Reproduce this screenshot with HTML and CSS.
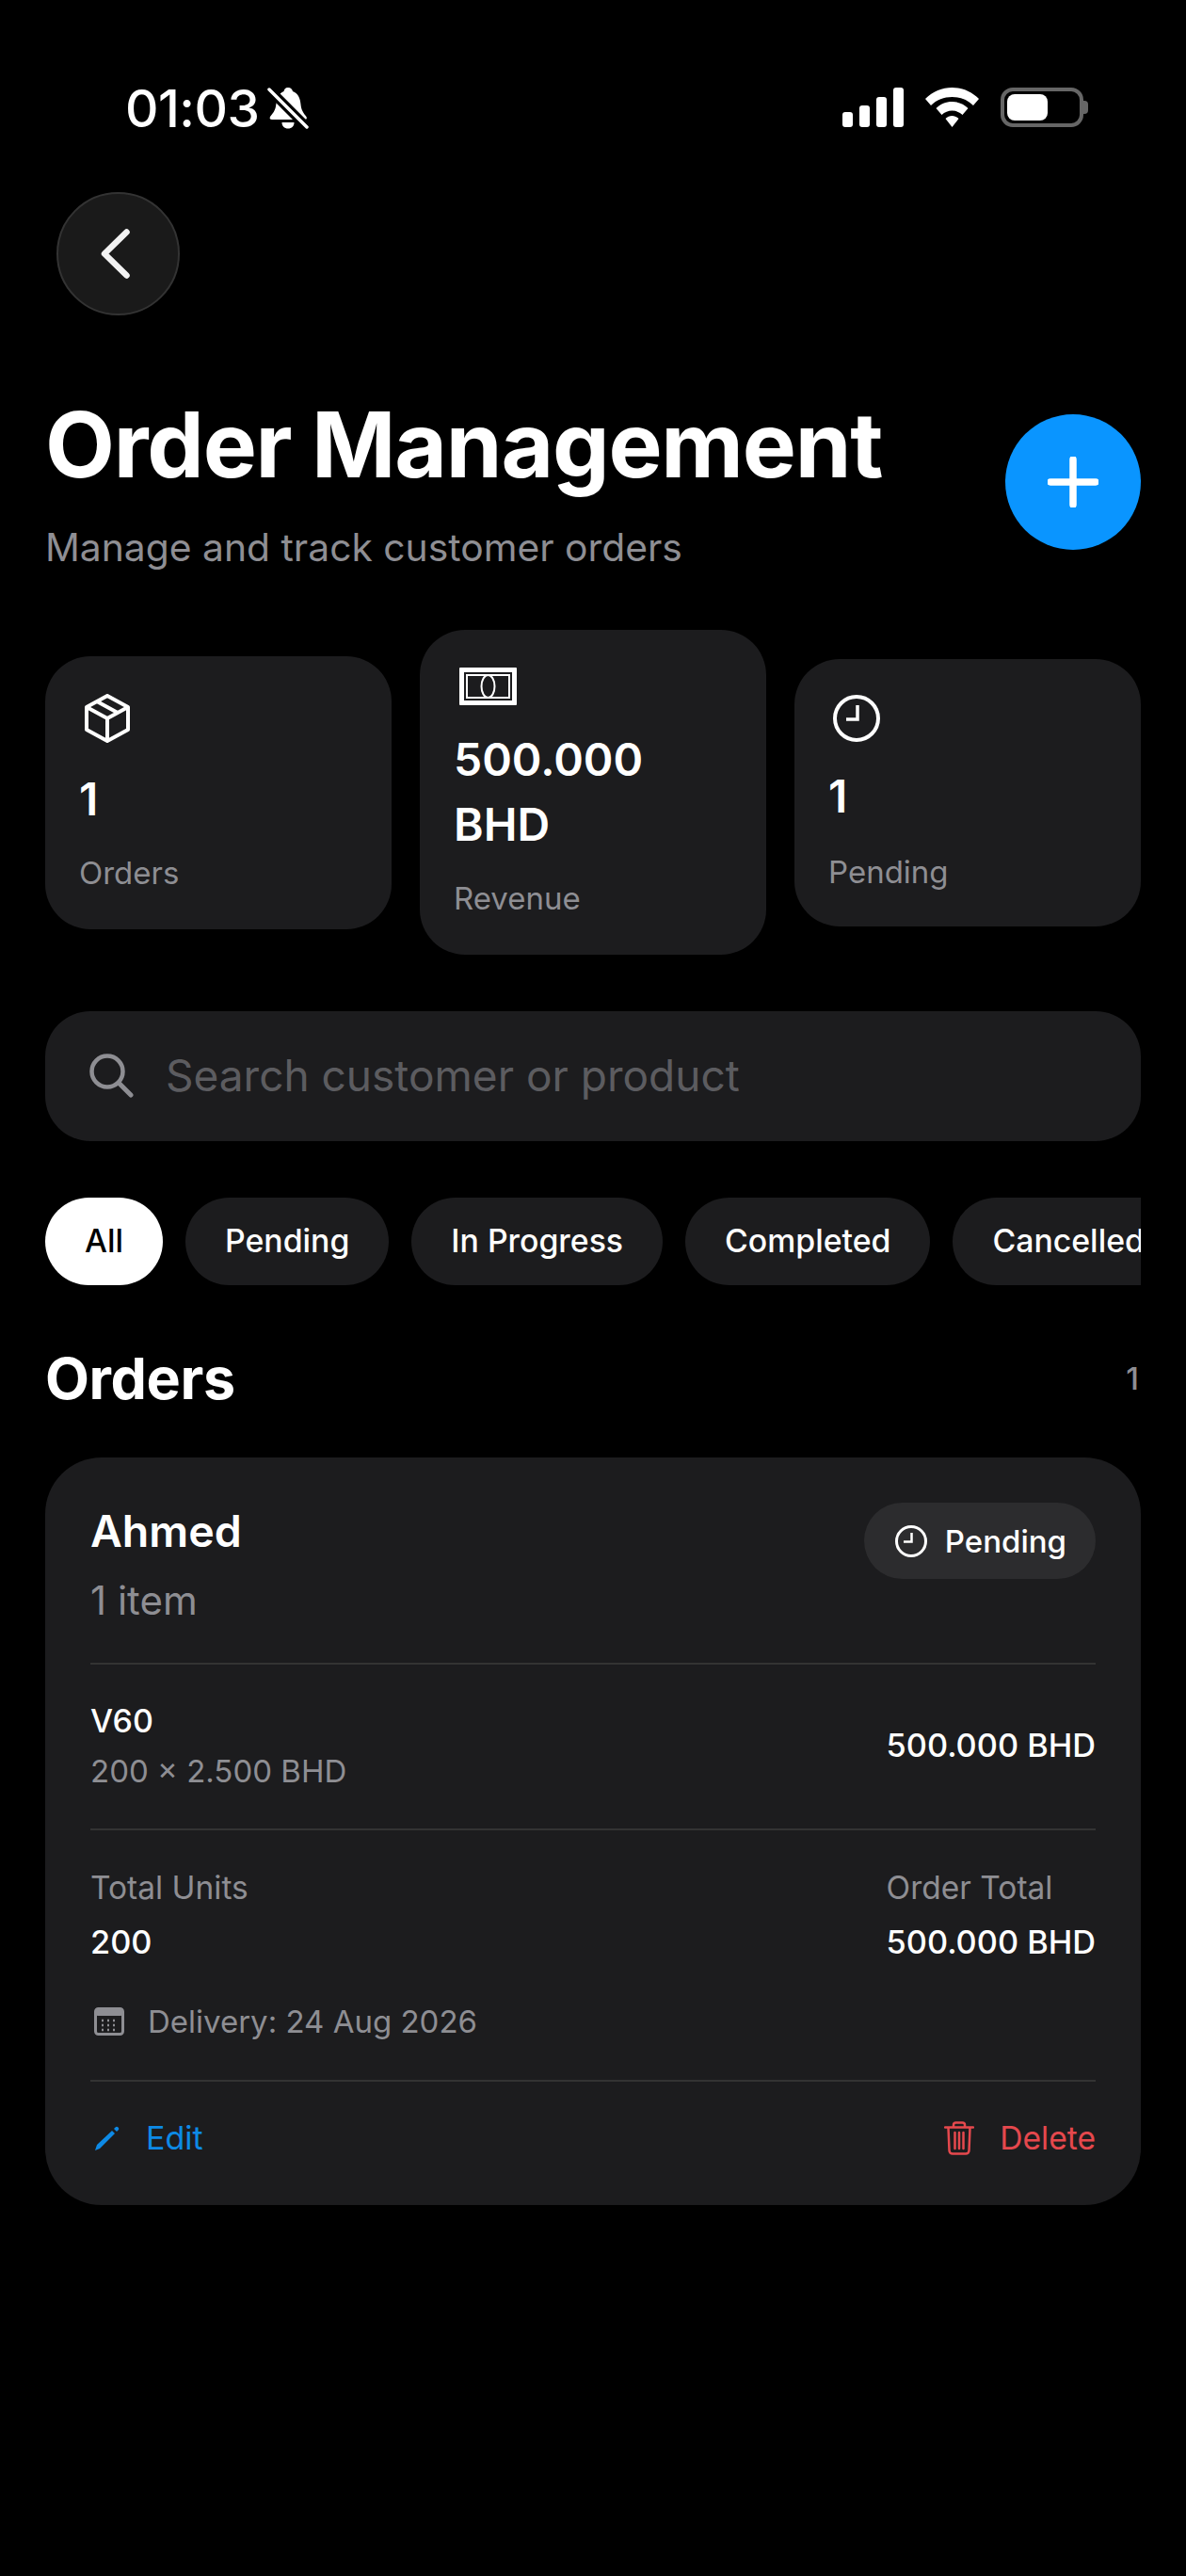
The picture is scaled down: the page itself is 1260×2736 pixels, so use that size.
FILE: index.html
```html
<!DOCTYPE html>
<html>
<head>
    <meta charset="utf-8">
    <title>Order Management</title>
    <link rel="stylesheet" href="styles.css">
</head>
<body>
    <div class="status-bar">
        <div class="status-left">
            <span class="status-time">01:03</span>
            <svg class="icon-bell" viewBox="0 0 46 44" width="46" height="44">
                <path d="M23 0c3 0 4.500 2 5 4 6 2 8 8 8.500 14 .5 6 3 9 6 13 1 2 0 3-2 3H6c-2 0-3-1-2-3 3-4 5-6 6-11 1-7 3-14 8.500-16 .5-2 1.500-4 4.500-4z" fill="#fff"/>
                <path d="M16.500 37h13c0 4-2.500 6.500-6.500 6.500s-6.500-2.500-6.500-6.500z" fill="#fff"/>
                <path d="M3 2l41 41" stroke="#000" stroke-width="10"/>
                <path d="M3 2l40 40" stroke="#fff" stroke-width="3.500" stroke-linecap="round"/>
            </svg>
        </div>
        <div class="status-right">
            <div class="signal">
                <span class="bar bar-1"></span>
                <span class="bar bar-2"></span>
                <span class="bar bar-3"></span>
                <span class="bar bar-4"></span>
            </div>
            <svg viewBox="0 0 57 42" width="57" height="42">
                <path d="M28.500 0C39 0 49 4 57 12l-6 7C45 13 37 10 28.500 10S12 13 6 19l-6-7C8 4 18 0 28.500 0z" fill="#fff"/>
                <path d="M28.500 15c6.500 0 12.500 2.500 17 7l-6 7c-3-3-7-4.500-11-4.500S20.500 26 17.500 29l-6-7c4.500-4.500 10.500-7 17-7z" fill="#fff"/>
                <path d="M28.500 30c2.500 0 5 1 7 3l-7 9-7-9c2-2 4.500-3 7-3z" fill="#fff"/>
            </svg>
            <div class="battery">
                <div class="battery-body"><span class="battery-fill"></span></div>
                <span class="battery-nub"></span>
            </div>
        </div>
    </div>

    <div class="page">
        <div class="back-btn">
            <svg viewBox="0 0 31 53" width="31" height="53">
                <path d="M27.500 3.500L4 26.500l23.500 23" fill="none" stroke="#f2f2f2" stroke-width="6.500" stroke-linecap="round" stroke-linejoin="round"/>
            </svg>
        </div>

        <div class="header">
            <div>
                <h1 class="title">Order Management</h1>
                <div class="subtitle">Manage and track customer orders</div>
            </div>
            <div class="add-btn">
                <svg viewBox="0 0 54 54" width="54" height="54">
                    <path d="M27 3v48M3 27h48" stroke="#fff" stroke-width="7.500" stroke-linecap="round"/>
                </svg>
            </div>
        </div>

        <div class="stats">
            <div class="stat-card">
                <svg class="stat-icon" viewBox="0 0 50 52" width="50" height="52">
                    <path d="M25 2l22 12v24L25 50 3 38V14z" fill="none" stroke="#fff" stroke-width="4" stroke-linejoin="round"/>
                    <path d="M3 14l22 12 22-12M25 26v24M14 8l22 12" fill="none" stroke="#fff" stroke-width="4"/>
                </svg>
                <div class="stat-value">1</div>
                <div class="stat-label">Orders</div>
            </div>
            <div class="stat-card stat-revenue">
                <svg class="stat-icon" viewBox="0 0 61 40" width="61" height="40">
                    <rect width="61" height="40" rx="1" fill="#fff"/>
                    <rect x="5" y="5" width="51" height="30" fill="#1c1c1e"/>
                    <rect x="8" y="8" width="45" height="24" fill="none" stroke="#fff" stroke-width="2"/>
                    <ellipse cx="30.500" cy="20" rx="7" ry="12" fill="none" stroke="#fff" stroke-width="2"/>
                </svg>
                <div class="stat-value">500.000 BHD</div>
                <div class="stat-label">Revenue</div>
            </div>
            <div class="stat-card stat-pending">
                <svg class="stat-icon" viewBox="0 0 50 50" width="50" height="50">
                    <circle cx="25" cy="25" r="23" fill="none" stroke="#fff" stroke-width="4"/>
                    <path d="M26 11v15H14" fill="none" stroke="#fff" stroke-width="3.500"/>
                </svg>
                <div class="stat-value">1</div>
                <div class="stat-label">Pending</div>
            </div>
        </div>

        <div class="search">
            <svg viewBox="0 0 47 47" width="47" height="47">
                <circle cx="19" cy="19" r="16.500" fill="none" stroke="#8e8e93" stroke-width="4.500"/>
                <path d="M31 31l13 13" stroke="#8e8e93" stroke-width="5" stroke-linecap="round"/>
            </svg>
            <span class="search-text">Search customer or product</span>
        </div>

        <div class="chips">
            <div class="chip active">All</div>
            <div class="chip">Pending</div>
            <div class="chip">In Progress</div>
            <div class="chip">Completed</div>
            <div class="chip">Cancelled</div>
        </div>

        <div class="section-head">
            <h2 class="section-title">Orders</h2>
            <span class="section-count">1</span>
        </div>

        <div class="order-card">
            <div class="order-top">
                <div>
                    <div class="customer">Ahmed</div>
                    <div class="item-count">1 item</div>
                </div>
                <div class="status-pill">
                    <svg viewBox="0 0 34 34" width="34" height="34">
                        <circle cx="17" cy="17" r="15.500" fill="none" stroke="#fff" stroke-width="3"/>
                        <path d="M17.500 8v9.500H9" fill="none" stroke="#fff" stroke-width="2.500"/>
                    </svg>
                    <span>Pending</span>
                </div>
            </div>

            <div class="order-line">
                <div>
                    <div class="product">V60</div>
                    <div class="product-qty">200 × 2.500 BHD</div>
                </div>
                <div class="strong-text">500.000 BHD</div>
            </div>

            <div class="totals">
                <div>
                    <div class="muted-label">Total Units</div>
                    <div class="strong-text">200</div>
                </div>
                <div>
                    <div class="muted-label">Order Total</div>
                    <div class="strong-text">500.000 BHD</div>
                </div>
            </div>

            <div class="delivery">
                <svg viewBox="0 0 32 30" width="32" height="30">
                    <rect x="1.500" y="1.500" width="29" height="27" rx="3" fill="none" stroke="#8e8e93" stroke-width="3"/>
                    <rect x="1" y="1" width="30" height="8" rx="3" fill="#8e8e93"/>
                    <path d="M8 14h2M14 14h2M20 14h2M26 14h0M8 19h2M14 19h2M20 19h2M8 24h2M14 24h2M20 24h2" stroke="#8e8e93" stroke-width="2.500"/>
                </svg>
                <span>Delivery: 24 Aug 2026</span>
            </div>

            <div class="actions">
                <div class="action action-edit">
                    <svg viewBox="0 0 27 27" width="27" height="27">
                        <path d="M1 26l2-6L19 5l3 3L6 24z" fill="#0d8ae6"/>
                        <path d="M21 3l1.500-1.500c1-1 2-1 3 0s1 2 0 3L24 6z" fill="#0d8ae6"/>
                    </svg>
                    <span>Edit</span>
                </div>
                <div class="action action-delete">
                    <svg viewBox="0 0 32 36" width="32" height="36">
                        <path d="M1 6.500h30M10 6V4c0-1.500 1-2.500 2.500-2.500h7C21 1.500 22 2.500 22 4v2M4.500 7l1 24c0 2 1.500 3.500 3.500 3.500h14c2 0 3.500-1.500 3.500-3.500l1-24M11.500 12v17M16 12v17M20.500 12v17" fill="none" stroke="#e5484d" stroke-width="2.500" stroke-linecap="round"/>
                    </svg>
                    <span>Delete</span>
                </div>
            </div>
        </div>
    </div>
</body>
</html>
```

FILE: styles.css
```css
* {
    margin: 0;
    padding: 0;
    box-sizing: border-box;
}
body {
    background: #000;
    color: #fff;
    width: 1260px;
    height: 2736px;
    overflow: hidden;
    font-family: Inter, "Noto Sans", sans-serif;
}
svg {
    display: block;
    flex-shrink: 0;
}
.status-bar {
    height: 204px;
    padding: 93px 104px 0 133px;
    display: flex;
    justify-content: space-between;
    align-items: flex-start;
}
.status-left {
    display: flex;
    align-items: center;
    gap: 7px;
}
.status-time {
    font-size: 55px;
    font-weight: 500;
    line-height: 44px;
    letter-spacing: -0.5px;
}
.status-right {
    display: flex;
    align-items: flex-start;
    gap: 23px;
}
.signal {
    display: flex;
    align-items: flex-end;
    gap: 7px;
    height: 42px;
}
.bar {
    width: 11px;
    background: #fff;
    border-radius: 3px;
}
.bar-1 { height: 16px; }
.bar-2 { height: 23px; }
.bar-3 { height: 32px; }
.bar-4 { height: 42px; }
.battery {
    display: flex;
    align-items: center;
    height: 42px;
}
.battery-body {
    width: 88px;
    height: 42px;
    border: 4px solid #666;
    border-radius: 13px;
    padding: 3px;
}
.battery-fill {
    display: block;
    width: 43px;
    height: 100%;
    background: #fff;
    border-radius: 8px;
}
.battery-nub {
    width: 5px;
    height: 14px;
    background: #666;
    border-radius: 0 4px 4px 0;
}
.page {
    padding: 0 48px;
}
.back-btn {
    width: 131px;
    height: 131px;
    margin-left: 12px;
    border-radius: 50%;
    background: #1a1a1a;
    border: 2px solid #333;
    display: flex;
    justify-content: center;
    align-items: center;
    padding-right: 6px;
}
.header {
    display: flex;
    justify-content: space-between;
    align-items: center;
    margin-top: 79px;
}
.title {
    font-size: 96px;
    font-weight: 700;
    line-height: 116px;
    letter-spacing: -1.200px;
}
.subtitle {
    font-size: 40.800px;
    line-height: 52px;
    color: #8e8e93;
    margin-top: 25px;
}
.add-btn {
    width: 144px;
    height: 144px;
    margin-top: 3px;
    border-radius: 50%;
    background: #0a95ff;
    display: flex;
    justify-content: center;
    align-items: center;
}
.stats {
    display: grid;
    grid-template-columns: 1fr 1fr 1fr;
    gap: 30px;
    align-items: center;
    margin-top: 62px;
}
.stat-card {
    background: #1c1c1e;
    border-radius: 48px;
    padding: 40px 36px 40px;
}
.stat-icon {
    margin-left: 5px;
    margin-bottom: 25px;
}
.stat-revenue .stat-icon {
    margin-left: 6px;
    margin-bottom: 23px;
}
.stat-pending {
    padding-top: 38px;
    padding-bottom: 38px;
}
.stat-pending .stat-icon {
    margin-bottom: 23px;
}
.stat-pending .stat-label {
    margin-top: 26px;
}
.stat-value {
    font-size: 48px;
    font-weight: 600;
    line-height: 69px;
}
.stat-label {
    font-size: 33px;
    line-height: 40px;
    color: #8e8e93;
    margin-top: 24px;
}
.search {
    height: 138px;
    margin-top: 60px;
    background: #1c1c1e;
    border-radius: 48px;
    padding: 0 0 2px 47px;
    display: flex;
    align-items: center;
    gap: 34px;
}
.search-text {
    font-size: 46px;
    color: #5c5c60;
}
.chips {
    display: flex;
    gap: 24px;
    margin-top: 60px;
    overflow: hidden;
}
.chip {
    flex-shrink: 0;
    height: 93px;
    padding: 0 42px;
    border-radius: 47px;
    background: #1c1c1e;
    font-size: 33.800px;
    font-weight: 500;
    line-height: 91px;
}
.chip.active {
    background: #fff;
    color: #000;
}
.section-head {
    display: flex;
    justify-content: space-between;
    align-items: center;
    margin-top: 63px;
}
.section-title {
    font-size: 61px;
    font-weight: 700;
    line-height: 72px;
    letter-spacing: -0.400px;
}
.section-count {
    font-size: 33px;
    font-weight: 500;
    color: #8e8e93;
    margin-right: 2px;
}
.order-card {
    margin-top: 48px;
    background: #1c1c1e;
    border-radius: 60px;
    padding: 48px 48px 50px;
}
.order-top {
    display: flex;
    justify-content: space-between;
    align-items: flex-start;
    padding-bottom: 40px;
    border-bottom: 2px solid #333;
}
.customer {
    font-size: 46.500px;
    font-weight: 600;
    line-height: 60px;
}
.item-count {
    font-size: 42px;
    line-height: 52px;
    color: #8e8e93;
    margin-top: 18px;
}
.status-pill {
    height: 81px;
    padding: 0 31px 0 33px;
    border-radius: 41px;
    background: #2c2c2e;
    display: flex;
    align-items: center;
    gap: 19px;
    font-size: 33px;
    font-weight: 500;
}
.order-line {
    display: flex;
    justify-content: space-between;
    align-items: center;
    padding: 38px 0 41px;
    border-bottom: 2px solid #333;
}
.product {
    font-size: 34px;
    font-weight: 500;
    line-height: 44px;
}
.product-qty {
    font-size: 33px;
    line-height: 40px;
    color: #8e8e93;
    margin-top: 11px;
}
.strong-text {
    font-size: 34.300px;
    font-weight: 500;
    line-height: 44px;
}
.totals {
    display: flex;
    justify-content: space-between;
    padding-top: 40px;
}
.muted-label {
    font-size: 33.500px;
    line-height: 42px;
    color: #8e8e93;
    margin-bottom: 15px;
}
.delivery {
    display: flex;
    align-items: center;
    gap: 25px;
    margin-top: 41px;
    padding-bottom: 41px;
    padding-left: 4px;
    border-bottom: 2px solid #333;
    font-size: 33px;
    line-height: 42px;
    color: #8e8e93;
}
.actions {
    display: flex;
    justify-content: space-between;
    align-items: center;
    padding-top: 39px;
    font-size: 34px;
    line-height: 42px;
}
.action {
    display: flex;
    align-items: center;
}
.action-edit {
    gap: 28px;
    padding-left: 4px;
    color: #0d8ae6;
}
.action-delete {
    gap: 27px;
    font-size: 33.600px;
    color: #e5484d;
}
```
